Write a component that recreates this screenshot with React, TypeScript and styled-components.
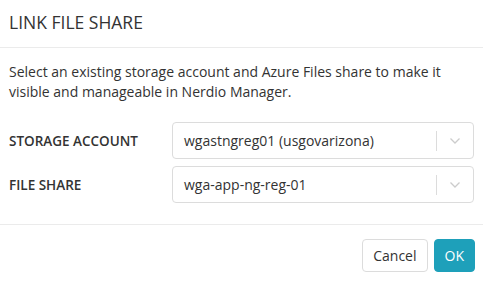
import React from 'react';
import styled, { createGlobalStyle } from 'styled-components';

const GlobalStyle = createGlobalStyle`
	html, body {
		margin: 0;
		padding: 0;
		background: #fff;
	}
	body {
		font-family: 'Open Sans', 'Noto Sans', sans-serif;
		color: #333;
	}
`;

const ChevronDown = () => (
	<svg width="12" height="8" viewBox="0 0 12 8" fill="none">
		<path d="M1.5 1.5 L6 6 L10.5 1.5" stroke="#cccccc" strokeWidth="1.3" />
	</svg>
);

const Select = ({ value }: { value: string }) => (
	<SelectBox>
		<SelectValue>{value}</SelectValue>
		<Separator />
		<Indicator>
			<ChevronDown />
		</Indicator>
	</SelectBox>
);

const App = () => {
	return (
		<Dialog>
			<GlobalStyle />
			<Header>
				<Title>LINK FILE SHARE</Title>
			</Header>
			<Body>
				<Description>
					Select an existing storage account and Azure Files share to make it visible and
					manageable in Nerdio Manager.
				</Description>
				<Form>
					<Row>
						<Label>STORAGE ACCOUNT</Label>
						<Select value="wgastngreg01 (usgovarizona)" />
					</Row>
					<Row>
						<Label>FILE SHARE</Label>
						<Select value="wga-app-ng-reg-01" />
					</Row>
				</Form>
			</Body>
			<Footer>
				<Button>Cancel</Button>
				<Button primary>OK</Button>
			</Footer>
		</Dialog>
	);
};

const Dialog = styled.div`
	width: 483px;
	height: 282px;
	display: flex;
	flex-direction: column;
	background: #fff;
`;

const Header = styled.div`
	height: 48px;
	padding: 0 9px 4px;
	display: flex;
	align-items: center;
	border-bottom: 1px solid #ebebeb;
	box-sizing: border-box;
`;

const Title = styled.h1`
	margin: 0;
	font-size: 17.5px;
	font-weight: 400;
	color: #333;
`;

const Body = styled.div`
	padding: 14px 9px 21px;
	border-bottom: 1px solid #ebebeb;
`;

const Description = styled.p`
	margin: 0;
	width: 440px;
	font-size: 14px;
	line-height: 20px;
	color: #333;
`;

const Form = styled.div`
	display: flex;
	flex-direction: column;
	gap: 7px;
	margin-top: 20px;
`;

const Row = styled.div`
	display: grid;
	grid-template-columns: 163px 1fr;
	align-items: center;
`;

const Label = styled.label`
	font-size: 13.5px;
	font-weight: 600;
	color: #333;
`;

const SelectBox = styled.div`
	height: 37px;
	box-sizing: border-box;
	border: 1px solid #dcdcdc;
	border-radius: 4px;
	display: flex;
	align-items: center;
	padding-left: 11px;
`;

const SelectValue = styled.span`
	flex: 1;
	font-size: 14px;
	color: #333;
`;

const Separator = styled.span`
	width: 1px;
	height: 20px;
	background: #dcdcdc;
`;

const Indicator = styled.span`
	width: 36px;
	display: flex;
	align-items: center;
	justify-content: center;
`;

const Footer = styled.div`
	display: flex;
	justify-content: flex-end;
	gap: 6px;
	padding: 14px 8px 0;
`;

const Button = styled.button<{ primary?: boolean }>`
	height: 33px;
	padding: 0 10px;
	border-radius: 4px;
	font-family: 'Open Sans', 'Noto Sans', sans-serif;
	font-size: 14px;
	cursor: pointer;
	border: 1px solid ${(p) => (p.primary ? '#1ea0ba' : '#dcdcdc')};
	background: ${(p) => (p.primary ? '#1ea0ba' : '#fff')};
	color: ${(p) => (p.primary ? '#fff' : '#333')};
`;

export default App;
